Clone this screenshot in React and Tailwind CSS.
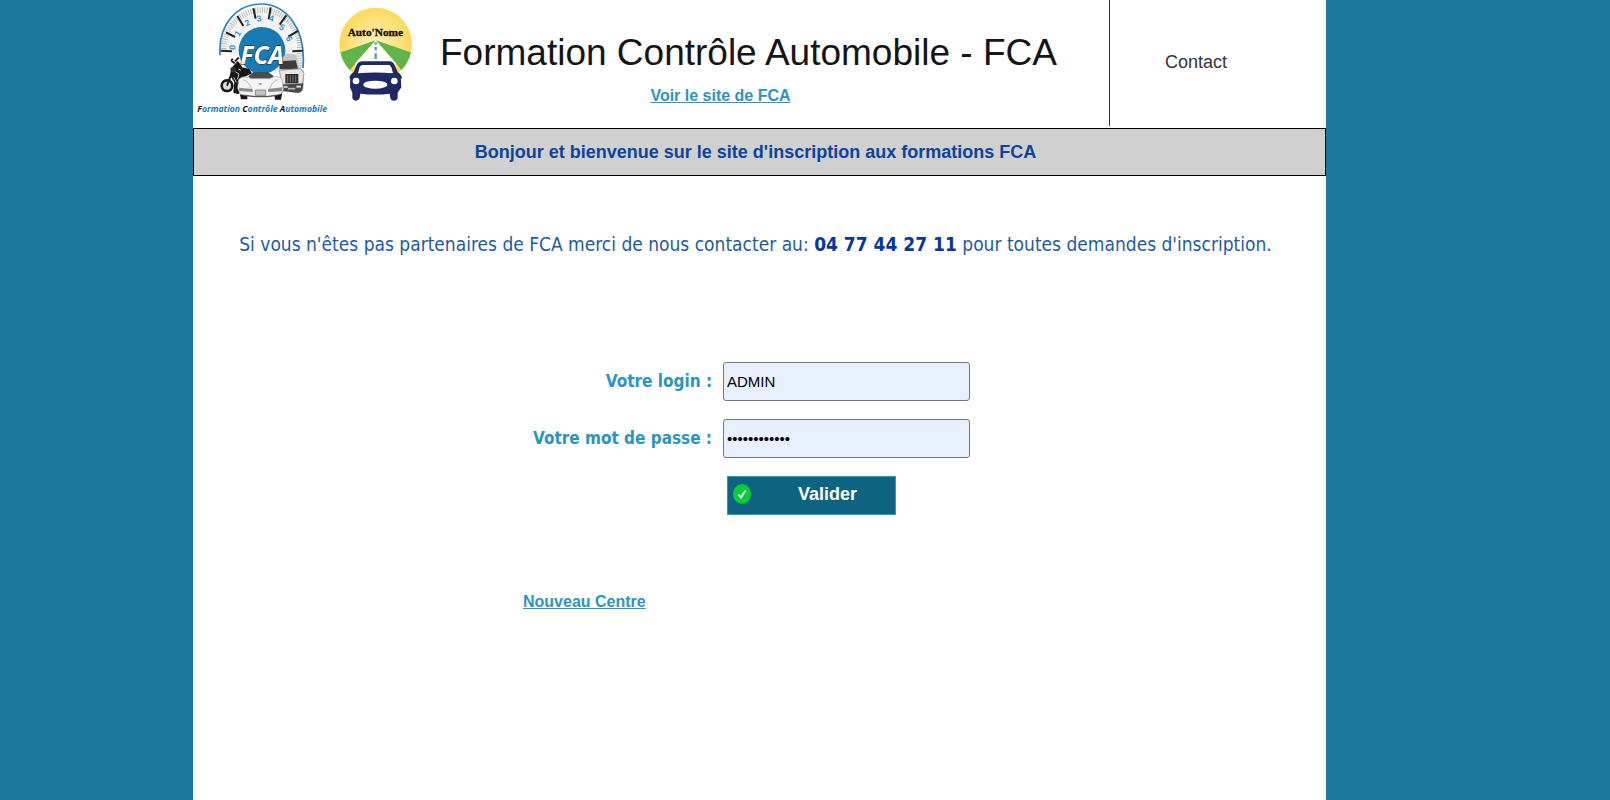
import { useState } from "react";

// ─── Logos ────────────────────────────────────────────────────────────────────

// Graduations du compteur : traits longs, avec des traits fins entre deux
const MAJOR_TICKS = [
    [107, 152, 141, 154],
    [123, 97, 150, 111],
    [157, 48, 175, 78],
    [205, 25, 212, 56],
    [257, 22, 251, 58],
    [304, 46, 284, 74],
    [340, 92, 310, 110],
    [353, 152, 322, 154],
];

const DIGITS = [
    [144, 149, "0", -85],
    [160, 108, "1", -55],
    [188, 77, "2", -30],
    [222, 64, "3", -8],
    [259, 64, "4", 12],
    [290, 90, "5", 35],
    [311, 124, "6", 65],
];

function FcaLogo() {
    return (
        <svg viewBox="24 0 420 345" className="w-[140px] h-[115px] shrink-0" role="img" aria-label="Formation Contrôle Automobile">
            <path d="M109 140C116 80 160 23 229 22C298 23 348 74 352 145L354 202L300 202L300 120C280 84 190 75 165 130L160 168L109 160Z" fill="#f3f3f3" />
            <path d="M116 146A114 116 0 0 1 345 146" fill="none" stroke="#a8a8a8" strokeWidth="18" strokeDasharray="2 5" />
            <path d="M343 160L345 205" stroke="#a8a8a8" strokeWidth="18" strokeDasharray="2 5" />
            <path d="M105 166C99 70 158 12 228 12C304 12 364 86 354 204" fill="none" stroke="#2783bb" strokeWidth="5" />
            {MAJOR_TICKS.map(([x1, y1, x2, y2]) => (
                <line key={x1} x1={x1} y1={y1} x2={x2} y2={y2} stroke="#222" strokeWidth="6" />
            ))}
            {DIGITS.map(([x, y, n, angle]) => (
                <text key={n} x={x} y={y} fill="#3b93c8" fontSize="26" fontWeight="bold" textAnchor="middle" transform={`rotate(${angle} ${x} ${y - 7})`} className="font-['Liberation_Sans',sans-serif]">
                    {n}
                </text>
            ))}
            <circle cx="231" cy="151" r="70" fill="#197bb5" />

            {/* Moto */}
            <circle cx="126" cy="257" r="16" fill="#ddd" stroke="#171717" strokeWidth="8" />
            <path d="M126 257L145 207M138 181L149 190M139 180L144 177M150 184L161 173M142 205L158 187L171 205L190 209L197 219L172 230L159 279L148 276L151 246L138 225Z" fill="#171717" stroke="#171717" strokeWidth="6" strokeLinejoin="round" />
            <path d="M151 215L162 222L157 238M146 232L154 247M160 207L168 211" fill="none" stroke="#c8c8c8" strokeWidth="3" />
            <circle cx="144" cy="209" r="8" fill="#333" />

            {/* Camion */}
            <path d="M289 176L306 160L334 164L338 185L342 207L356 210L356 264L346 279L292 275Z" fill="#c4c4c4" />
            <path d="M284 184L332 181L339 206L283 208Z" fill="#3c3c3c" />
            <path d="M283 211L348 206L357 220L352 254L290 252Z" fill="#e6e6e6" stroke="#777" strokeWidth="2" />
            <path d="M301 222H340V250H301Z" fill="#2e2e2e" />
            <path d="M308 226V247M316 226V247M324 226V247M332 226V247" stroke="#9a9a9a" strokeWidth="2" />
            <path d="M289 254L355 250L352 272L340 279L291 272Z" fill="#484848" />
            <path d="M296 261H308M334 260H348" stroke="#eee" strokeWidth="5" />
            <path d="M309 266H331" stroke="#bbb" strokeWidth="5" />

            {/* Voiture */}
            <path d="M163 275H187V298H168ZM267 276H292L288 299H270Z" fill="#161616" />
            <path d="M190 229L205 216H249L266 228L262 236H196Z" fill="#4c4c4c" />
            <path d="M161 239C171 225 189 232 199 236H255C266 229 281 226 291 238L295 267L289 281L258 289H199L166 283L158 265Z" fill="#f4f4f4" stroke="#a5a5a5" strokeWidth="2" />
            <path d="M174 239C190 244 198 260 199 267M279 239C263 244 257 257 255 267" fill="none" stroke="#bbb" strokeWidth="3" />
            <path d="M162 263L203 267V276L163 273ZM249 267L293 262L290 274L249 276Z" fill="#888" />
            <path d="M211 270H242V286H211Z" fill="#c5c5c5" stroke="#666" strokeWidth="2" />
            <path d="M220 250H232L226 256Z" fill="#888" />
            <path d="M181 286L208 290H247L273 286" fill="none" stroke="#555" strokeWidth="4" />

            <text x="166" y="191" fill="#fff" stroke="#1b1b1b" strokeWidth="3" paintOrder="stroke" fontSize="74" fontWeight="bold" fontStyle="italic" className="font-['Open_Sans',sans-serif]">
                FCA
            </text>
            <text x="37" y="335" fill="#1b7cb7" fontSize="26" fontWeight="bold" fontStyle="italic" className="font-['Open_Sans',sans-serif]">
                <tspan fill="#111">F</tspan>ormation <tspan fill="#111">C</tspan>ontrôle <tspan fill="#111">A</tspan>utomobile
            </text>
        </svg>
    );
}

function AutoNomeLogo() {
    return (
        <svg viewBox="33 0 240 309" className="w-[80px] h-[103px] shrink-0" role="img" aria-label="Auto'Nome">
            <defs>
                <radialGradient id="sun" cx="0.5" cy="0.5" r="0.55">
                    <stop offset="0" stopColor="#fff3c0" />
                    <stop offset="1" stopColor="#fcd54e" />
                </radialGradient>
                <clipPath id="disc">
                    <ellipse cx="152" cy="133" rx="109" ry="110" />
                </clipPath>
            </defs>
            <g clipPath="url(#disc)">
                <path d="M40 20H265V250H40Z" fill="url(#sun)" />
                <path d="M152 121L40 160V190L68 218Z" fill="#61b34a" />
                <path d="M152 121L265 160V190L237 218Z" fill="#61b34a" />
                <path d="M152 121L91 190V220H213V190Z" fill="#fffdf4" />
                <path d="M152 127V134M152 141V151M152 160V177" stroke="#5c96d0" strokeWidth="7" />
            </g>
            <path d="M112 184H192Q204 184 209 195L218 216L227 229L229 262L218 278V294Q216 302 207 302Q198 302 196 294L194 281Q152 286 106 281L104 294Q101 302 92 302Q84 302 82 294V278L75 262L76 229L86 216L95 195Q100 184 112 184Z" fill="#202a62" />
            <path d="M113 195H190Q198 195 201 208L204 220Q152 215 99 220L103 205Q106 195 113 195Z" fill="#fff" />
            <path d="M80 232L86 224M224 232L218 224" stroke="#202a62" strokeWidth="13" strokeLinecap="round" />
            <circle cx="93" cy="243" r="10" fill="#fff" />
            <circle cx="208" cy="243" r="10" fill="#fff" />
            <ellipse cx="151" cy="254" rx="36" ry="12" fill="#fff" />
            <text x="151" y="108" textAnchor="middle" fill="#171307" stroke="#171307" strokeWidth="1" fontSize="34" fontWeight="bold" className="font-['Liberation_Serif',serif]">
                Auto'Nome
            </text>
        </svg>
    );
}

function CheckIcon() {
    return (
        <svg viewBox="0 0 18 20" className="w-[18px] h-[20px]" aria-hidden="true">
            <ellipse cx="9" cy="10" rx="9" ry="10" fill="#05cf35" />
            <path d="M5.5 10.5L8 13.5L12.5 6.5" fill="none" stroke="#fff" strokeWidth="1.8" />
        </svg>
    );
}

// ─── Formulaire ───────────────────────────────────────────────────────────────

function Field({ id, label, type, value, onChange }) {
    return (
        <>
            <label htmlFor={id} className="text-right text-[17px] font-bold text-[#2b95bf] font-['DejaVu_Sans_Condensed','Noto_Sans',sans-serif]">
                {label}
            </label>
            <input
                id={id}
                type={type}
                value={value}
                onChange={(e) => onChange(e.target.value)}
                className="w-[247px] h-[39px] px-[3px] rounded-[3px] border border-[#767676] bg-[#e8f0fe] text-[15px] text-black"
            />
        </>
    );
}

function LoginForm() {
    const [login, setLogin] = useState("ADMIN");
    const [password, setPassword] = useState("motdepasse12");

    return (
        <form
            onSubmit={(e) => e.preventDefault()}
            className="grid grid-cols-[519fr_603fr] items-center gap-x-[11px] gap-y-[18px]"
        >
            <Field id="login" label="Votre login :" type="text" value={login} onChange={setLogin} />
            <Field id="password" label="Votre mot de passe :" type="password" value={password} onChange={setPassword} />
            <button
                type="submit"
                className="col-start-2 ml-1 w-[169px] h-[39px] pl-[5px] pr-[38px] pb-[3px] flex items-center justify-between border border-[#1da0cc] bg-[#0d6380] text-lg font-bold text-white"
            >
                <CheckIcon />
                Valider
            </button>
        </form>
    );
}

// ─── Page ─────────────────────────────────────────────────────────────────────

export default function App() {
    return (
        <div className="min-h-screen grid grid-cols-[193fr_1133fr_284fr] bg-[#1c799c] font-['Liberation_Sans',Arial,sans-serif]">
            <div className="col-start-2 min-w-0 bg-white">
                <header className="flex h-32 items-start">
                    <FcaLogo />
                    <div className="flex flex-1 items-start pl-[3px]">
                        <AutoNomeLogo />
                        <div className="flex-1 pl-6 pt-7">
                            <h1 className="text-[37px] leading-[50px] text-[#151515] whitespace-nowrap">
                                Formation Contrôle Automobile - FCA
                            </h1>
                            <div className="mt-[6px] mr-[108px] text-center">
                                <a href="#site" className="text-base font-bold text-[#2b95bf] underline">
                                    Voir le site de FCA
                                </a>
                            </div>
                        </div>
                    </div>
                    <nav className="w-[217px] h-[126px] pt-12 pr-11 border-l border-[#333] text-center">
                        <a href="#contact" className="text-lg text-[#333]">Contact</a>
                    </nav>
                </header>

                <div className="flex h-12 items-center justify-center pr-2 border border-black bg-[#d0d0d0] text-lg font-bold text-[#0a449c]">
                    Bonjour et bienvenue sur le site d'inscription aux formations FCA
                </div>

                <p className="mt-[54px] pr-2 text-center text-[19px] leading-7 text-[#1d5ba4] font-['DejaVu_Sans_Condensed','Noto_Sans',sans-serif]">
                    Si vous n'êtes pas partenaires de FCA merci de nous contacter au:{" "}
                    <strong className="text-[#04389a]">04 77 44 27 11</strong> pour toutes demandes d'inscription.
                </p>

                <div className="mt-[104px]">
                    <LoginForm />
                </div>

                <div className="mt-[75px] pl-[330px]">
                    <a href="#nouveau" className="text-base font-bold text-[#2b95bf] underline">
                        Nouveau Centre
                    </a>
                </div>
            </div>
        </div>
    );
}
